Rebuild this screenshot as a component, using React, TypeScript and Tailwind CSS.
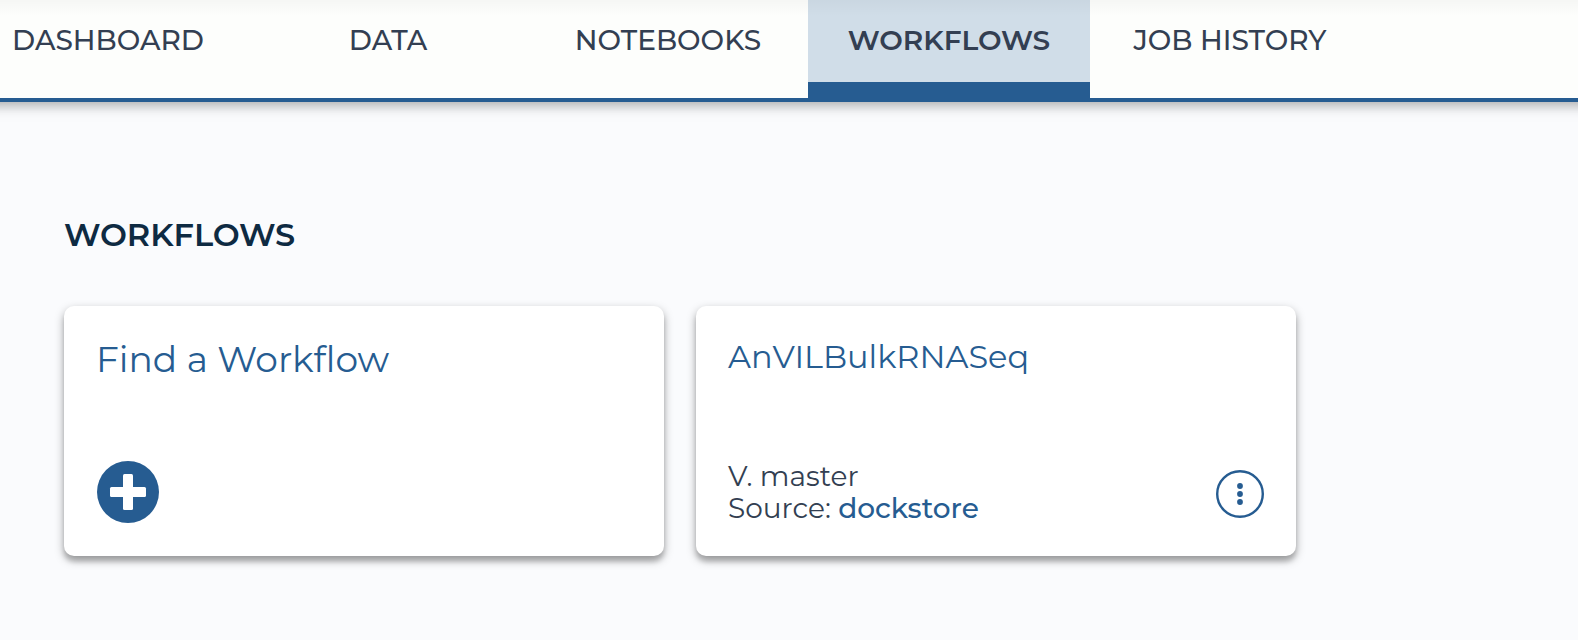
const tabs = [
  { label: 'DASHBOARD', active: false },
  { label: 'DATA', active: false },
  { label: 'NOTEBOOKS', active: false },
  { label: 'WORKFLOWS', active: true },
  { label: 'JOB HISTORY', active: false },
];

const cardClass =
  'flex h-[250px] w-[600px] flex-col justify-between rounded-[10px] bg-white px-8 pt-[33px] pb-8 shadow-[0_4px_10px_rgba(0,0,0,0.35),0_6px_4px_rgba(0,0,0,0.12)]';

function TabBar() {
  return (
    <nav
      aria-label="Workspace"
      className="overflow-hidden border-b-4 border-[#265c91] bg-[#fdfefc]"
    >
      <div className="flex h-[98px]">
        {tabs.map((tab) => (
          <a
            key={tab.label}
            href="#"
            aria-current={tab.active ? 'page' : undefined}
            className={
              tab.active
                ? 'flex w-[282px] shrink-0 items-center justify-center border-b-16 border-[#265c91] bg-[#d0dde8] pb-0.5 text-[28px] leading-8 font-semibold'
                : 'flex w-[280px] shrink-0 items-center justify-center pb-[18px] text-[28px] leading-8 font-medium'
            }
          >
            {tab.label}
          </a>
        ))}
      </div>
    </nav>
  );
}

function PlusCircle() {
  return (
    <svg viewBox="0 0 62 62" className="size-[62px]" aria-hidden="true">
      <circle cx="31" cy="31" r="31" fill="#265c91" />
      <rect x="26" y="13" width="10" height="36" rx="1.5" fill="#fff" />
      <rect x="13" y="26" width="36" height="10" rx="1.5" fill="#fff" />
    </svg>
  );
}

function MenuCircle() {
  return (
    <svg viewBox="0 0 48 48" className="size-12" aria-hidden="true">
      <circle cx="24" cy="24" r="22.8" fill="none" stroke="#265c91" strokeWidth="2.4" />
      <circle cx="24" cy="16" r="2.9" fill="#265c91" />
      <circle cx="24" cy="24" r="2.9" fill="#265c91" />
      <circle cx="24" cy="32" r="2.9" fill="#265c91" />
    </svg>
  );
}

export default function App() {
  return (
    <div className="min-h-screen overflow-x-clip bg-[#fafbfd] font-['Montserrat','Inter',sans-serif] text-[#333f52]">
      <header className="relative -mx-8 shadow-[0_4px_10px_rgba(0,0,0,0.26),0_4px_20px_rgba(0,0,0,0.06)]">
        <TabBar />
        <div className="pointer-events-none absolute inset-x-0 top-0 h-4 bg-linear-to-b from-black/3 to-transparent" />
      </header>
      <main className="px-16 pt-[113px] pb-16">
        <h1 className="text-[32px] leading-10 font-semibold text-[#0e2a42]">WORKFLOWS</h1>
        <div className="mt-[51px] flex flex-wrap gap-8">
          <button type="button" className={`${cardClass} items-start text-left`}>
            <span className="text-[36px] leading-10 text-[#265c91]">Find a Workflow</span>
            <span className="flex pb-px pl-px">
              <PlusCircle />
            </span>
          </button>
          <article className={cardClass}>
            <a href="#" className="text-[32px] leading-9 text-[#265c91]">
              AnVILBulkRNASeq
            </a>
            <div className="flex items-end justify-between">
              <div className="text-[28px] leading-8">
                <p>V. master</p>
                <p>
                  Source:{' '}
                  <a href="#" className="font-medium text-[#265c91]">
                    dockstore
                  </a>
                </p>
              </div>
              <button type="button" aria-label="Workflow menu" className="mb-[6px]">
                <MenuCircle />
              </button>
            </div>
          </article>
        </div>
      </main>
    </div>
  );
}
